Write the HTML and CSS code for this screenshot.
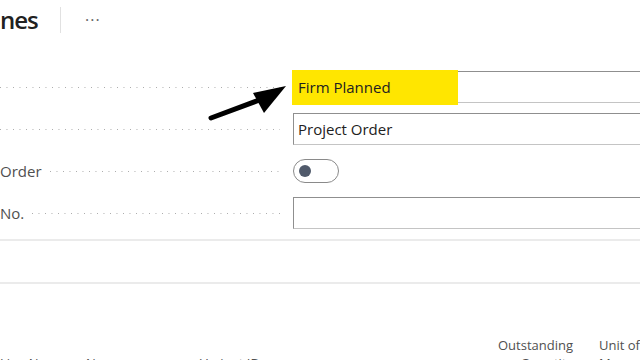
FILE: index.html
```html
<!DOCTYPE html>
<html lang="en">
<head>
    <meta charset="UTF-8">
    <meta name="viewport" content="width=device-width, initial-scale=1.0">
    <title>Lines</title>
    <link rel="stylesheet" href="styles.css">
</head>
<body>
    <div class="page-header">
        <h1 class="page-title">nes</h1>
        <span class="divider"></span>
        <span class="more">&middot;&middot;&middot;</span>
    </div>

    <div class="form">
        <div class="row">
            <div class="label"><span class="leader"></span></div>
            <div class="field">
                <span class="mark"></span>
                <span class="value">Firm Planned</span>
            </div>
        </div>
        <div class="row">
            <div class="label"><span class="leader"></span></div>
            <div class="field"><span class="value">Project Order</span></div>
        </div>
        <div class="row">
            <div class="label"><span class="text">Order</span><span class="leader"></span></div>
            <div class="toggle"><span class="knob"></span></div>
        </div>
        <div class="row">
            <div class="label"><span class="text">No.</span><span class="leader"></span></div>
            <div class="field"></div>
        </div>

        <!-- annotation arrow -->
        <svg class="arrow" width="90" height="44" viewBox="0 0 90 44">
            <line x1="3" y1="38" x2="54" y2="19" stroke="#000" stroke-width="5" stroke-linecap="round"/>
            <polygon points="78,6 45,13 56,33" fill="#000"/>
        </svg>
    </div>

    <div class="section-gap"></div>

    <div class="grid-head">
        <div class="col">Line No. &#8593;</div>
        <div class="col">No.</div>
        <div class="col">Variant ID</div>
        <div class="col num">Outstanding<br>Quantity</div>
        <div class="col last">Unit of<br>Measure</div>
    </div>
</body>
</html>
```

FILE: styles.css
```css
body { margin: 0; font-family: "Open Sans", "Noto Sans", sans-serif; color: #212121; background: #fff; overflow: hidden; }

.page-header { display: flex; align-items: center; height: 40px; }
.page-title { margin: 0; font-size: 24px; font-weight: 600; line-height: 40px; width: 60px; letter-spacing: -1px; }
.divider { width: 1px; height: 26px; background: #e1e1e1; }
.more { margin-left: 24px; font-size: 16px; color: #666; letter-spacing: 1px; margin-top: 0; }

.form { position: relative; padding-top: 31px; display: flex; flex-direction: column; gap: 10px; padding-bottom: 10px; border-bottom: 2px solid #ebebeb; }
.row { display: flex; align-items: center; height: 32px; }
.label { width: 280px; margin-right: 13px; display: flex; align-items: center; font-size: 15px; color: #505050; }
.label .text { margin-right: 8px; }
.leader { flex: 1; height: 1px; background-image: linear-gradient(to right, #aaa 1px, transparent 1px); background-size: 6.5px 1px; }

.field { position: relative; flex: 1; height: 30px; border: 1px solid #8f8f8f; border-bottom-color: #c4c4c4; border-right: none; display: flex; align-items: center; }
.value { position: relative; padding-left: 4px; font-size: 15px; color: #212121; }
.mark { position: absolute; left: -2px; top: -2px; width: 166px; height: 35px; background: #ffe600; }

.toggle { box-sizing: border-box; width: 46px; height: 24px; border: 1px solid #8a8a8a; border-radius: 12px; display: flex; align-items: center; padding-left: 5px; }
.knob { width: 12px; height: 12px; border-radius: 50%; background: #505a6b; }

.arrow { position: absolute; left: 208px; top: 40px; }

.section-gap { height: 41px; border-bottom: 2px solid #ebebeb; }

.grid-head { display: grid; grid-template-columns: 86px 114px 273px 100px auto; align-items: end; padding-top: 52px; font-size: 13px; line-height: 18px; color: #505050; }
.num { text-align: right; }
.last { margin-left: 26px; }
```
